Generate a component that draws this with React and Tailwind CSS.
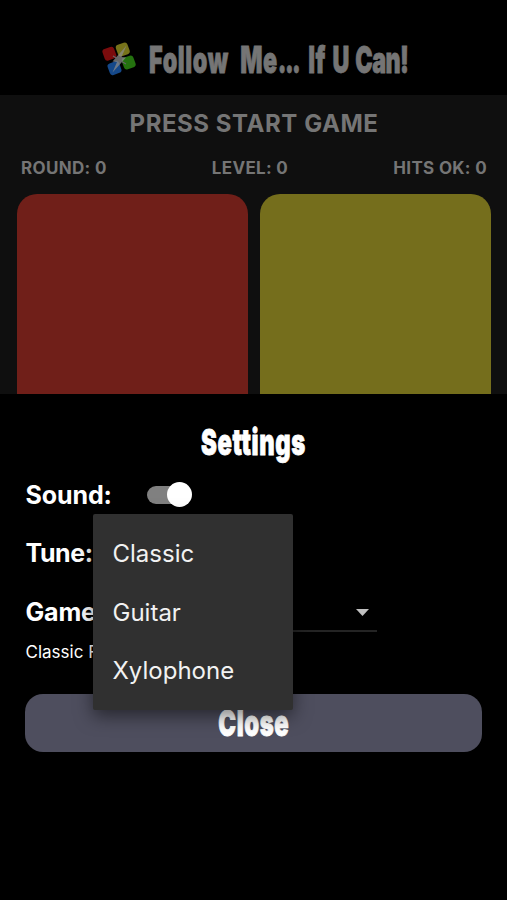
import React from "react";
import clsx from "clsx";

const TUNES = ["Classic", "Guitar", "Xylophone"];

const Logo = () => (
    <svg className="h-[36px] w-[36px] shrink-0" viewBox="0 0 36 36">
        <rect x="2.3" y="6.6" width="12.2" height="12.2" rx="3" fill="#7b0c0d" transform="rotate(-20 8.4 12.7)" />
        <rect x="15.7" y="2.4" width="12.2" height="12.2" rx="3" fill="#77731a" transform="rotate(-20 21.8 8.5)" />
        <rect x="7.4" y="21" width="12.2" height="12.2" rx="3" fill="#154889" transform="rotate(-20 13.5 27.1)" />
        <rect x="21.6" y="15.4" width="12.2" height="12.2" rx="3" fill="#24720f" transform="rotate(-20 27.7 21.5)" />
        <path d="M25.5 4.5 L11.5 20.5 L16 21 L11.5 31.5 L25 16.5 L20.5 16 Z" fill="#898989" fillOpacity="0.75" />
        <path d="M12 15 L17 18 M20 20 L25 23" stroke="#666" strokeWidth="1.2" fill="none" />
    </svg>
);

const Display = ({ children, className }) => (
    <span
        className={clsx(
            "inline-block whitespace-nowrap font-['Inter',sans-serif] font-black tracking-[0.9px] [-webkit-text-stroke:0.8px_currentColor]",
            className
        )}
    >
        {children}
    </span>
);

const Header = () => (
    <header className="flex h-[95px] bg-black pt-[41px] pl-[101px]">
        <Logo />
        <div className="ml-[12px] h-[37px] w-[260px]">
            <Display className="origin-left scale-x-[0.63] text-[37px] leading-[37px] text-[#757575] [word-spacing:6px]">
                Follow <span className="ml-[4px]">Me</span>
                <span className="tracking-[-2.5px]">...</span> If
                <span className="tracking-[-0.9px] [word-spacing:4px]"> U Can!</span>
            </Display>
        </div>
    </header>
);

const Board = () => (
    <main className="h-[299px] overflow-hidden bg-[#0f0f0f] text-[#757575]">
        <h2 className="pt-[14px] pl-px text-center text-[24px] leading-[30px] font-bold tracking-[0.55px]">
            PRESS START GAME
        </h2>
        <div className="mt-[18px] flex justify-between pr-[20px] pl-[21px] text-[17px] leading-[22px] font-bold tracking-[0.32px]">
            <span>ROUND: 0</span>
            <span>LEVEL: 0</span>
            <span>HITS OK: 0</span>
        </div>
        <div className="mt-[15px] flex gap-[12px] pr-[16px] pl-[17px]">
            <div className="h-[231px] flex-1 rounded-[20px] bg-[#701f19]" />
            <div className="h-[231px] flex-1 rounded-[20px] bg-[#756e1c]" />
        </div>
    </main>
);

const Switch = () => (
    <div className="relative h-[26px] w-[45px]">
        <div className="mt-[4px] h-[18px] w-[42px] rounded-full bg-[#808080]" />
        <div className="absolute top-[0.5px] right-0 h-[25px] w-[25px] rounded-full bg-white" />
    </div>
);

const TuneMenu = () => (
    <ul className="absolute top-[120px] left-[93px] h-[196px] w-[200px] rounded-[2px] bg-[#303030] py-[11px] shadow-[0_6px_18px_rgba(0,0,0,0.5)]">
        {TUNES.map((tune) => (
            <li key={tune} className="flex h-[58.6px] items-center pl-[19.5px] text-[24px] text-[#f2f2f2]">
                {tune}
            </li>
        ))}
    </ul>
);

const Settings = () => (
    <section className="relative h-[506px] bg-black px-[25px] pt-[28px] text-white">
        <div className="flex h-[40px] justify-center">
            <Display className="scale-x-[0.66] text-[36px] leading-[40px]">Settings</Display>
        </div>
        <div className="mt-[3px] flex h-[59px] items-center text-[25px] font-bold">
            <span className="w-[122px] pt-[2px] pl-[0.5px] tracking-[-0.1px]">Sound:</span>
            <Switch />
        </div>
        <div className="flex h-[59px] items-center pt-px pl-[0.5px] text-[25px] font-bold tracking-[-0.4px]">Tune:</div>
        <div className="flex h-[58px] items-center text-[25px] font-bold">
            <span className="pt-px pl-[0.5px] tracking-[-0.2px]">Game:</span>
            <div className="mr-[105px] ml-auto flex h-[40px] w-[200px] items-center justify-end border-b-2 border-[#242424] pt-[2px] pr-[8px]">
                <svg className="h-[7px] w-[13px]" viewBox="0 0 13 7">
                    <path d="M0 0h13L6.5 7z" fill="#c0c0c0" />
                </svg>
            </div>
        </div>
        <p className="h-[53px] pl-[0.5px] text-[17px] leading-[22px]">Classic F</p>
        <button className="flex h-[58px] w-[457px] justify-center rounded-[18px] bg-[#4e4e5e] pt-[9px]">
            <Display className="scale-x-[0.66] text-[36px] leading-[40px]">Close</Display>
        </button>
        <TuneMenu />
    </section>
);

const App = () => {
    return (
        <div className="h-[900px] w-[507px] overflow-hidden bg-black font-['Inter',sans-serif]">
            <Header />
            <Board />
            <Settings />
        </div>
    );
};

export default App;
